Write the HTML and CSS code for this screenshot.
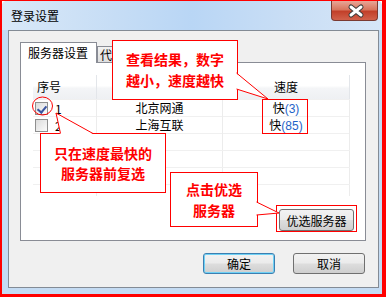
FILE: index.html
```html
<!DOCTYPE html>
<html lang="zh-CN">
<head>
  <meta charset="UTF-8" />
  <title>登录设置</title>
  <link rel="stylesheet" href="styles.css">
</head>
<body>
  <div class="screen">
    <div class="window">
      <div class="titlebar">
        <span class="title">登录设置</span>
        <div class="close">
          <svg width="47" height="19" viewBox="0 0 47 19">
            <path d="M19 7 L29 15 M29 7 L19 15" stroke="#3b3b3b" stroke-width="5" stroke-linecap="round"/>
            <path d="M19 7 L29 15 M29 7 L19 15" stroke="#fff" stroke-width="3" stroke-linecap="round"/>
          </svg>
        </div>
      </div>

      <div class="client">
        <!-- Tabs -->
        <div class="tabs">
          <div class="tab active">服务器设置</div>
          <div class="tab other">代</div>
        </div>

        <div class="panel">
          <div class="list">
            <div class="row head">
              <div class="cell left">序号</div>
              <div class="cell"></div>
              <div class="cell">速度</div>
            </div>
            <div class="row">
              <div class="cell left"><span class="check on"></span>1</div>
              <div class="cell">北京网通</div>
              <div class="cell">快<span class="num">(3)</span></div>
            </div>
            <div class="row">
              <div class="cell left"><span class="check"></span>2</div>
              <div class="cell">上海互联</div>
              <div class="cell">快<span class="num">(85)</span></div>
            </div>
            <div class="row"><div class="cell"></div><div class="cell"></div><div class="cell"></div></div>
            <div class="row"><div class="cell"></div><div class="cell"></div><div class="cell"></div></div>
            <div class="row"><div class="cell"></div><div class="cell"></div><div class="cell"></div></div>
            <div class="row"><div class="cell"></div><div class="cell"></div><div class="cell"></div></div>
          </div>
          <div class="panel-foot">
            <button class="btn wide">优选服务器</button>
          </div>
        </div>

        <div class="dialog-buttons">
          <button class="btn default">确定</button>
          <button class="btn">取消</button>
        </div>
      </div>
    </div>

    <!-- Annotations -->
    <div class="note note-result">查看结果，数字<br>越小，速度越快</div>
    <div class="note note-check">只在速度最快的<br>服务器前复选</div>
    <div class="note note-btn">点击优选<br>服务器</div>
    <div class="mark mark-speed"></div>
    <div class="mark mark-btn"></div>
    <svg class="tails" width="386" height="297" viewBox="0 0 386 297">
      <ellipse cx="42.5" cy="106" rx="10" ry="9" fill="none" stroke="#f00" stroke-width="1"/>
      <polygon points="236,73 268,99 236,89" fill="#fff"/>
      <polyline points="236.5,73 268,99 236.5,89" fill="none" stroke="#f00"/>
      <polygon points="60,134 56,113 93,134" fill="#fff"/>
      <polyline points="60.5,133.5 56,113 93,133.5" fill="none" stroke="#f00"/>
      <polygon points="256,202 279,213 256,215" fill="#fff"/>
      <polyline points="256.5,202 279,213 256.5,215" fill="none" stroke="#f00"/>
    </svg>
  </div>
</body>
</html>
```

FILE: styles.css
```css
* { box-sizing: border-box; }
body {
  margin: 0;
  background: #fff;
  font-family: "Liberation Sans", "Noto Sans CJK SC", sans-serif;
  font-size: 12px;
  color: #000;
}

.screen {
  position: relative;
  width: 386px;
  height: 297px;
  border-style: solid;
  border-color: #f00;
  border-width: 1px 4px 3px 2px;
  overflow: hidden;
}

.window {
  height: 100%;
  background: #c4dbf3;
  border-radius: 5px 5px 0 0;
  padding: 0 3px 6px 6px;
  display: flex;
  flex-direction: column;
}

.titlebar {
  height: 29px;
  margin: 0 -3px 0 -6px;
  padding-left: 9px;
  display: flex;
  align-items: flex-start;
  justify-content: space-between;
  border-radius: 5px 5px 0 0;
  background: linear-gradient(90deg, #d9e8f8 0%, #c6ddf5 30%, #b9d6f5 50%, #c9def5 75%, #d6e6f8 100%);
}

.title {
  margin-top: 8px;
  font-family: "Noto Sans CJK SC", sans-serif;
  font-size: 12px;
  line-height: 14px;
}

.close {
  width: 47px;
  height: 20px;
  margin-right: 4px;
  border: 1px solid #7a3a32;
  border-top: none;
  border-radius: 0 0 4px 4px;
  background: linear-gradient(#e7a697 0%, #d8765f 45%, #c2402a 55%, #d1614b 100%);
}
.close svg { display: block; margin-top: -1px; }

.client {
  flex: 1;
  background: #f0f0f0;
  border: 1px solid #838b95;
  padding: 11px 12px 0 11px;
}

.tabs {
  display: flex;
  align-items: flex-end;
  height: 20px;
}

.tab {
  height: 16px;
  padding: 0 6px;
  border: 1px solid #898c95;
  border-bottom: none;
  background: linear-gradient(#f2f2f2, #dedede);
  font-family: "Noto Sans CJK SC", sans-serif;
  line-height: 15px;
}
.tab.other {
  width: 40px;
  padding-left: 2px;
}

.tab.active {
  height: 21px;
  margin-bottom: -1px;
  width: 77px;
  padding: 0 0 0 7px;
  background: #fff;
  position: relative;
  z-index: 1;
  line-height: 19px;
}

.panel {
  height: 179px;
  background: #fff;
  border: 1px solid #898c95;
  padding: 12px 11px 9px 12px;
  display: flex;
  flex-direction: column;
  justify-content: space-between;
}

.list {
  width: 317px;
  height: 121px;
  overflow: hidden;
}

.row {
  display: grid;
  grid-template-columns: 64px 126px 127px;
  height: 17px;
  border-top: 1px solid #f0f0f0;
}

.row.head {
  height: 24px;
  border-top: none;
  background: linear-gradient(#ffffff 0%, #ffffff 45%, #f4f5f7 55%, #eef0f3 100%);
}

.cell {
  border-right: 1px solid #ececec;
  text-align: center;
  line-height: 16px;
  font-family: "Noto Sans CJK SC", sans-serif;
  white-space: nowrap;
}
.row.head .cell {
  line-height: 23px;
  border-right-color: #e3e6ea;
}
.cell.left {
  text-align: left;
  padding-left: 4px;
}
.row .cell.left { display: flex; align-items: center; }
.row.head .cell.left { display: block; }

.check {
  width: 13px;
  height: 13px;
  margin: 0 7px 0 -2px;
  border: 1px solid #8f8f8f;
  background: linear-gradient(135deg, #dcdcdc, #fbfbfb);
  position: relative;
}
.check.on::after {
  content: "";
  position: absolute;
  left: 3px;
  top: 1px;
  width: 4px;
  height: 7px;
  border: solid #3b55a0;
  border-width: 0 2px 2px 0;
  transform: rotate(40deg);
}

.num {
  font-family: "Liberation Sans", sans-serif;
  color: #1e63c8;
}

.panel-foot {
  display: flex;
  justify-content: flex-end;
}

.btn {
  width: 72px;
  height: 21px;
  padding: 0;
  border: 1px solid #707070;
  border-radius: 3px;
  background: linear-gradient(#f2f2f2 0%, #ebebeb 48%, #dddddd 52%, #cfcfcf 100%);
  font-family: "Noto Sans CJK SC", sans-serif;
  font-size: 12px;
  color: #000;
}
.btn.wide {
  width: 75px;
  height: 22px;
}
.btn.default {
  border-color: #3c7fb1;
  box-shadow: inset 0 0 0 1px #6fd1f5;
}

.dialog-buttons {
  display: flex;
  justify-content: flex-end;
  gap: 18px;
  margin-top: 12px;
  padding-right: 1px;
}

/* annotations */
.note {
  position: absolute;
  background: #fff;
  border: 1px solid #f00;
  color: #f00;
  font-family: "Noto Sans CJK SC", sans-serif;
  font-weight: bold;
  font-size: 14px;
  line-height: 21px;
  text-align: center;
  display: flex;
  align-items: center;
  justify-content: center;
}
.note-result { left: 110px; top: 39px; width: 126px; height: 60px; }
.note-check { left: 38px; top: 132px; width: 126px; height: 60px; line-height: 20px; }
.note-btn { left: 168px; top: 171px; width: 88px; height: 55px; }

.mark {
  position: absolute;
  border: 1px solid #f00;
}
.mark-speed { left: 260px; top: 98px; width: 46px; height: 35px; }
.mark-btn { left: 274px; top: 204px; width: 81px; height: 27px; }

.tails {
  position: absolute;
  left: -2px;
  top: -1px;
}
```
